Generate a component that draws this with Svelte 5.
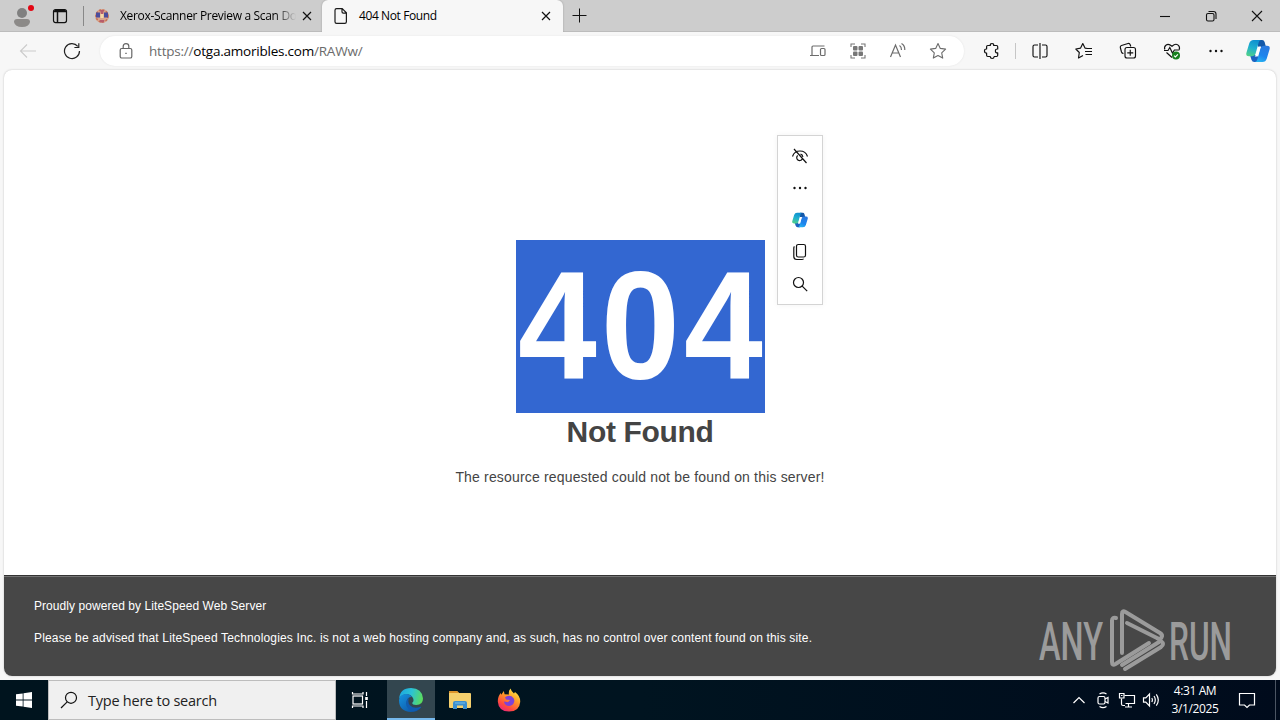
<script lang="ts">
    let url = { scheme: "https://", host: "otga.amoribles.com", path: "/RAWw/" };
    let clock = { time: "4:31 AM", date: "3/1/2025" };
</script>

{#snippet copilot(size: number)}
    <svg width={size} height={size} viewBox="0 0 24 24">
        <defs>
            <linearGradient id="cpA" x1="0.6" y1="0" x2="0.3" y2="1">
                <stop offset="0" stop-color="#0f8fd0" />
                <stop offset="0.5" stop-color="#20b0cf" />
                <stop offset="1" stop-color="#4fd08a" />
            </linearGradient>
            <linearGradient id="cpB" x1="0.7" y1="0" x2="0.3" y2="1">
                <stop offset="0" stop-color="#2a78de" />
                <stop offset="0.6" stop-color="#1c85ee" />
                <stop offset="1" stop-color="#27b4f0" />
            </linearGradient>
        </defs>
        <path d="M12 1h4.200q1.800 0 2.400 2l1.400 5h-8z" fill="#1358a8" />
        <path d="M12 23H8.200q-2 0-2.700-2.200L4 16h8z" fill="#1c62c0" />
        <path
            d="M7.500 1H15q-1.700.4-2.300 2.600L9.600 14.500Q8.800 17.300 6 17.300H3Q-.6 17.300.5 13.500L3.200 4.500Q4.300 1 7.500 1z"
            fill="url(#cpA)"
        />
        <path
            d="M16.500 23H9q1.700-.4 2.300-2.600l3.100-10.900q.8-2.800 3.600-2.800h3q3.600 0 2.500 3.800l-2.700 9Q19.700 23 16.500 23z"
            fill="url(#cpB)"
        />
        <path d="M12.300 7.500h2.900q-.8.800-1.100 2l-2.400 8h-3q.8-.9 1.200-2.200z" fill="#fff" />
    </svg>
{/snippet}

<div class="screen">
    <div class="tabstrip">
        <div class="cell avatar">
            <svg width="26" height="26" viewBox="0 0 26 26">
                <circle cx="13" cy="10" r="5" fill="#808080" />
                <path d="M5 19q0-3 3-3h10q3 0 3 3-1 5-8 5t-8-5z" fill="#8c8a88" />
                <circle cx="22" cy="5" r="3" fill="#e30613" />
            </svg>
        </div>
        <div class="cell workspace">
            <svg width="16" height="16" viewBox="0 0 16 16" fill="none" stroke="#111" stroke-width="1.200">
                <rect x="1.500" y="1.600" width="13" height="13" rx="2" />
                <path d="M1.500 3.500h13M5.500 4v10.500" stroke-width="1.500" />
                <path d="M2.500 2.800h11" stroke-width="1.800" />
            </svg>
        </div>
        <div class="tab">
            <svg class="favicon" width="16" height="16" viewBox="0 0 16 16">
                <circle cx="8" cy="8" r="7" fill="#d9a58c" />
                <circle cx="8" cy="8" r="6" fill="none" stroke="#c56d55" stroke-width="1.500" stroke-dasharray="2 1.500" />
                <path d="M2 4.500h4v5H2zM10 4.500h4v5h-4z" fill="#4b4d9d" />
                <path d="M6 2h4l-1 4H7zM5.500 12h5l-1 2.500h-3z" fill="#b65d6c" />
                <path d="M6.500 6h3v4h-3z" fill="#f4d8a8" />
            </svg>
            <span class="title faded">Xerox-Scanner Preview a Scan Do</span>
            <svg class="x" width="10" height="10" viewBox="0 0 10 10"><path d="M1 1l8 8M9 1L1 9" /></svg>
        </div>
        <div class="tab active">
            <svg class="favicon" width="16" height="18" viewBox="0 0 16 18" fill="none" stroke="#1b1b1b" stroke-width="1.200">
                <path d="M3.600 1.600h5.600l4.200 4.200v9q0 1.600-1.600 1.600H3.600Q2 16.400 2 14.800V3.200q0-1.600 1.600-1.600zM9 1.800v3q0 1.300 1.300 1.300h3" />
            </svg>
            <span class="title">404 Not Found</span>
            <svg class="x" width="10" height="10" viewBox="0 0 10 10"><path d="M1 1l8 8M9 1L1 9" /></svg>
        </div>
        <svg class="plus" width="16" height="16" viewBox="0 0 16 16"><path d="M8.500 1.500v14M1.500 8.500h14" /></svg>
        <div class="window-buttons">
            <svg width="12" height="12" viewBox="0 0 12 12"><path d="M1 6.500h10" /></svg>
            <svg width="12" height="12" viewBox="0 0 12 12">
                <rect x="1.500" y="3.500" width="7.500" height="7.500" rx="1.500" />
                <path d="M3.500 1.500h5q2.500 0 2.500 2.500v5" />
            </svg>
            <svg width="12" height="12" viewBox="0 0 12 12"><path d="M1 1l10 10M11 1L1 11" /></svg>
        </div>
    </div>

    <div class="toolbar">
        <div class="cell back">
            <svg width="18" height="16" viewBox="0 0 18 16" fill="none" stroke="#cbcbcb" stroke-width="1.100">
                <path d="M17 8H1.500M8 1.500L1.500 8 8 14.500" />
            </svg>
        </div>
        <div class="cell reload">
            <svg width="18" height="18" viewBox="0 0 18 18" fill="none" stroke="#222" stroke-width="1.200">
                <path d="M16.500 9A7.500 7.500 0 1 1 14.800 4.300M15.800 1.300v4.200h-4.400" />
            </svg>
        </div>
        <div class="omnibox">
            <svg class="lock" width="14" height="18" viewBox="0 0 14 18" fill="none" stroke="#666" stroke-width="1.200">
                <rect x="1.200" y="6.500" width="11.600" height="9.500" rx="1.600" />
                <path d="M4.200 6.500V4.300Q4.200 1.700 7 1.700t2.800 2.600v2.200" />
                <path d="M6.300 11.300h1.400" />
            </svg>
            <span class="url">{url.scheme}<b>{url.host}</b>{url.path}</span>
            <div class="actions">
                <svg width="18" height="18" viewBox="0 0 18 18" fill="none" stroke="#6c6c6c" stroke-width="1.200">
                    <path d="M15.500 4H4Q3 4 3 5v8M1 13.500h9" />
                    <rect x="11.500" y="6.500" width="4.500" height="7" rx="1" />
                </svg>
                <svg width="18" height="18" viewBox="0 0 18 18" fill="none" stroke="#777" stroke-width="1.100">
                    <path d="M2 5V2h4M12 2h4v3M16 13v3h-4M6 16H2v-3" />
                    <g fill="#777" stroke="none">
                        <rect x="4" y="4" width="4.500" height="4.500" rx="1" />
                        <rect x="9.500" y="4" width="4.500" height="4.500" rx="1" />
                        <rect x="4" y="9.500" width="4.500" height="4.500" rx="1" />
                        <rect x="9.500" y="9.500" width="4.500" height="4.500" rx="1" />
                    </g>
                </svg>
                <svg width="18" height="18" viewBox="0 0 18 18" fill="none" stroke="#6c6c6c" stroke-width="1.200">
                    <path d="M1.500 15L6.500 3l5 12M3.300 11h6.400M10.500 3.500q2 1.200 2 4.500M12.500 1.500q3.500 2 3.300 6.500" />
                </svg>
                <svg width="18" height="18" viewBox="0 0 18 18" fill="none" stroke="#6c6c6c" stroke-width="1.100">
                    <path d="M9 1.500l2.300 4.900 5.300.7-3.900 3.700 1 5.300L9 13.500l-4.700 2.600 1-5.300-3.900-3.700 5.300-.7z" stroke-linejoin="round" />
                </svg>
            </div>
        </div>
        <div class="cell extensions">
            <svg width="18" height="18" viewBox="0 0 18 18" fill="none" stroke="#111" stroke-width="1.200">
                <path
                    d="M4.800 3.500h2.500q-.2-2 1.700-2t1.700 2h2.800q1.200 0 1.200 1.200V7q-2.300-.2-2.300 1.900t2.300 1.900v2.500q0 1.200-1.200 1.200h-2.300q-.2 2-2 2t-2-2H4.800q-1.200 0-1.200-1.200V11q-2.100 0-2.100-2.100T3.600 7V4.700q0-1.200 1.200-1.200z"
                    stroke-linejoin="round"
                />
            </svg>
        </div>
        <div class="divider"></div>
        <div class="tools">
            <svg width="18" height="18" viewBox="0 0 18 18">
                <path d="M7 3H3.500Q2 3 2 4.500v9Q2 15 3.500 15H7M11 3h3.500Q16 3 16 4.500v9q0 1.500-1.500 1.500H11M9 1v16" />
            </svg>
            <svg width="18" height="18" viewBox="0 0 18 18">
                <path d="M12.500 6.500L10 6.100 7.800 1.500 5.600 6.100.8 7l3.500 3.500-.8 5.500 4.500-2.600M11.500 6.500H17M10 9.500h7M10.500 12.500H17" stroke-linejoin="round" />
            </svg>
            <svg width="18" height="18" viewBox="0 0 18 18">
                <path d="M4.500 11.500Q3 11.500 2.500 10L1.300 5.500Q1 4 2.500 3.500l6.500-2q1.600-.4 2.200 1.200l.6 1.800" />
                <rect x="6" y="5.500" width="10.500" height="10.500" rx="2" />
                <path d="M11.250 7.800v6M8.250 10.800h6" />
            </svg>
            <svg width="18" height="18" viewBox="0 0 18 18">
                <path d="M1.800 7.500Q.8 4.500 3.200 2.900T9 4.200q3.400-3 5.800-1.300t1.500 4.600M1 8.500h4l1.800-3 2.600 5.500 2-3h5M3.500 10.500L9 15.500" />
                <circle cx="13" cy="13.500" r="4" fill="#18801f" stroke="none" />
                <path d="M11 13.600l1.400 1.300 2.500-2.500" stroke="#fff" />
            </svg>
            <svg width="18" height="18" viewBox="0 0 18 18">
                <g fill="#111" stroke="none"><circle cx="3.500" cy="9" r="1.200" /><circle cx="9" cy="9" r="1.200" /><circle cx="14.500" cy="9" r="1.200" /></g>
            </svg>
        </div>
        <div class="cell assistant">{@render copilot(24)}</div>
    </div>

    <div class="viewport">
        <main>
            <h1><span>404</span></h1>
            <h2>Not Found</h2>
            <p>The resource requested could not be found on this server!</p>
        </main>
        <footer>
            <p class="powered">Proudly powered by LiteSpeed Web Server</p>
            <p class="advice">
                Please be advised that LiteSpeed Technologies Inc. is not a web hosting company and, as such, has no
                control over content found on this site.
            </p>
        </footer>

        <div class="mini-menu">
            <svg width="18" height="18" viewBox="0 0 18 18">
                <path d="M1.500 9.500Q3.300 4 9 4t7.500 5.500M3 2l12.500 14M6.700 8.500a2.900 2.900 0 1 0 4.500 3.500M9.500 7.200q2 .3 2.400 2.600" />
            </svg>
            <svg width="18" height="18" viewBox="0 0 18 18">
                <g fill="#111" stroke="none"><circle cx="3.500" cy="9" r="1.200" /><circle cx="9" cy="9" r="1.200" /><circle cx="14.500" cy="9" r="1.200" /></g>
            </svg>
            {@render copilot(16)}
            <svg width="18" height="18" viewBox="0 0 18 18">
                <rect x="5.500" y="1.500" width="9" height="12.500" rx="1.800" />
                <path d="M3.500 3.500Q2.800 4 2.800 5v8.500q0 3 3 3h5q1.200 0 1.700-.8" />
            </svg>
            <svg width="18" height="18" viewBox="0 0 18 18">
                <circle cx="7.500" cy="7.500" r="5" />
                <path d="M11.200 11.200l5 5" />
            </svg>
        </div>

        <svg class="watermark" width="200" height="66" viewBox="0 0 200 66">
            <text x="2" y="52" textLength="64" lengthAdjust="spacingAndGlyphs">ANY</text>
            <text x="132" y="52" textLength="63" lengthAdjust="spacingAndGlyphs">RUN</text>
            <g fill="none" stroke="#9b9b9b" stroke-width="4" stroke-linejoin="round" stroke-linecap="round">
                <path d="M79 10q-4-1-4 2.500V54q0 4 3.500 2L112 35" />
                <path d="M85 45V6q0-4 3.500-2L123 25q3 2 1.500 4.500T120 30L90 15" />
                <path d="M88 61l36-22q4-3 0-6M85 57l37-23" />
            </g>
        </svg>
    </div>

    <div class="taskbar">
        <div class="slot start">
            <svg width="16" height="16" viewBox="0 0 16 16" fill="#fff">
                <path d="M0 2.300l6.700-.9v6.200H0zM7.500 1.200L16 0v7.600H7.500zM0 8.400h6.700v6.200L0 13.700zM7.500 8.400H16V16l-8.500-1.200z" />
            </svg>
        </div>
        <div class="search">
            <svg width="18" height="18" viewBox="0 0 18 18" fill="none" stroke="#111" stroke-width="1.200">
                <circle cx="11" cy="6.800" r="5.500" />
                <path d="M7.200 10.800L1 17" />
            </svg>
            <span>Type here to search</span>
        </div>
        <div class="slot task-view">
            <svg width="18" height="18" viewBox="0 0 18 18" fill="none" stroke="#fff" stroke-width="1.200">
                <rect x="2" y="5" width="9.500" height="8" />
                <path d="M1.500 1v2h10.500V1M1.500 17v-2h10.500v2M15.500 1v4M15.500 10v7" />
                <path d="M14.200 6h2.600v3h-2.600z" fill="#fff" stroke="none" />
            </svg>
        </div>
        <div class="slot running">
            <svg width="24" height="24" viewBox="0 0 24 24">
                <defs>
                    <linearGradient id="edgeTop" x1="0" y1="0.3" x2="1" y2="0.5">
                        <stop offset="0" stop-color="#1ca7e0" />
                        <stop offset="0.5" stop-color="#2cc3d4" />
                        <stop offset="1" stop-color="#5bdc5c" />
                    </linearGradient>
                    <linearGradient id="edgeBase" x1="0" y1="0" x2="1" y2="1">
                        <stop offset="0" stop-color="#1593df" />
                        <stop offset="1" stop-color="#0c4a9b" />
                    </linearGradient>
                </defs>
                <path d="M0 11Q1 0 12 0t12 10.500q0 6.500-6.800 6.500-4 0-4-2.200 2-1.300 1-4.300Q12 6 7 6.300 2 6.800 0 11z" fill="url(#edgeTop)" />
                <path d="M0 12q.8-5.500 7-6 4 0 6 3-3-.6-4.500 2-2 4 1 7.500 4 4.500 12.500 1-3.600 4.500-10 4.500Q0 23.500 0 12z" fill="url(#edgeBase)" />
                <path d="M8.500 11q-3.500 5 1 10t12.500-1.500q.5-.9-.5-.7-6.500 2.400-10.300-1.300Q8.300 14.600 10 10z" fill="#105cb0" />
            </svg>
        </div>
        <div class="slot explorer">
            <svg width="22" height="20" viewBox="0 0 22 20">
                <path d="M0 2q0-1 1-1h7l2 2h11q1 0 1 1v13q0 1-1 1H1q-1 0-1-1z" fill="#f5d06d" />
                <path d="M0 2q0-1 1-1h7l2 2H0z" fill="#dd952b" />
                <path d="M4 19v-6q0-2 2-2h10q2 0 2 2v6h-4v-3.500H8V19z" fill="#3b8fcf" />
                <path d="M6 13h10" stroke="#74bde8" />
            </svg>
        </div>
        <div class="slot firefox">
            <svg width="24" height="24" viewBox="0 0 24 24">
                <defs>
                    <linearGradient id="fox" x1="0.8" y1="0" x2="0.2" y2="1">
                        <stop offset="0" stop-color="#fff14a" />
                        <stop offset="0.4" stop-color="#ff9a28" />
                        <stop offset="0.75" stop-color="#ff4a3e" />
                        <stop offset="1" stop-color="#e52384" />
                    </linearGradient>
                </defs>
                <path d="M13.500.5q1 3.300 3.500 5l1-1.500q5.500 4 5.200 10Q22.500 23.500 12 23.500T.8 13.500Q.8 8 3.800 5l.5 1.800L6.800 3l.8 3.200 4.300.2q-.5-3.500 1.600-5.900z" fill="url(#fox)" />
                <path d="M8 9.300q3-2.500 6.500-1 3.500 2 2.700 5.500-1 4-5 4.200-4.700-.2-5.200-4.500l4 .8 2-2.300-4-.5z" fill="#7d42d8" />
            </svg>
        </div>
        <div class="tray">
            <svg width="18" height="18" viewBox="0 0 18 18"><path d="M3.500 12L9 6.500l5.500 5.500" /></svg>
            <svg width="18" height="18" viewBox="0 0 18 18">
                <rect x="4" y="5.500" width="7" height="7.500" rx="1.500" />
                <path d="M11 8l3-1.500V12l-3-1.500M5.500 3Q9 .7 12.500 3M5.500 15.500q3.500 2.300 7 0" />
            </svg>
            <svg width="18" height="18" viewBox="0 0 18 18">
                <path d="M6.500 4.500h10v8h-9M10.500 12.500v3.500M7 16h7M3.500 7.500V13q0 1.500 1.500 1.500h2" />
                <path d="M1.500 2.500h4.500v4.500h-4.500zM3 4.500h1.500" />
            </svg>
            <svg width="18" height="18" viewBox="0 0 18 18">
                <path d="M1.500 6.800h2.300L7.500 3v12l-3.700-3.800H1.500zM9.800 7q1.200 2 0 4M12 5q2.600 4 0 8M14.300 3.300q4 5.700 0 11.400" />
            </svg>
        </div>
        <div class="clock">
            <span>{clock.time}</span>
            <span>{clock.date}</span>
        </div>
        <div class="notifications">
            <svg width="18" height="18" viewBox="0 0 18 18" fill="none" stroke="#fff" stroke-width="1.200">
                <path d="M1.500 2.500h15v11.500h-5L9 16.500 6.500 14h-5z" />
            </svg>
        </div>
        <div class="show-desktop"></div>
    </div>
</div>

<style>
    :global(body) {
        overflow: hidden;
    }

    .screen {
        display: flex;
        flex-direction: column;
        width: 1280px;
        height: 720px;
        background: #f7f7f7;
        font-family: "Open Sans", "Noto Sans", sans-serif;
        color: #000;
    }

    .screen svg {
        display: block;
        flex: none;
    }

    .cell,
    .slot {
        display: flex;
        align-items: center;
        justify-content: center;
        flex: none;
    }

    .tabstrip {
        display: flex;
        height: 32px;
        flex: none;
        background: #cdcdcd;
        box-shadow: inset 0 -1px #bcbcbc;
    }

    .avatar {
        width: 44px;
    }

    .workspace {
        width: 32px;
        margin-right: 7px;
    }

    .tab {
        display: flex;
        align-items: center;
        box-sizing: border-box;
        width: 239px;
        padding: 0 10px 0 11px;
        font-size: 12px;
        letter-spacing: -0.4px;
        border-radius: 0 0 6px 0;
    }

    .tab:not(.active) {
        background: linear-gradient(#888, #888) 0 6px / 1px 20px no-repeat;
    }

    .tab.active {
        width: 241px;
        padding-right: 12px;
        background: #f7f7f7;
        border-radius: 6px 6px 0 0;
        box-shadow: 0 0 2px #999;
        clip-path: inset(0 -2px 0 -2px);
    }

    .favicon {
        margin-right: 10px;
    }

    .title {
        flex: 1;
        white-space: nowrap;
        line-height: 20px;
    }

    .faded {
        margin-right: 3px;
        letter-spacing: -0.32px;
        mask-image: linear-gradient(90deg, #000 155px, transparent 176px);
    }

    .x,
    .plus {
        fill: none;
        stroke: #111;
        stroke-width: 1.2;
    }

    .plus {
        margin: 7px 0 0 8px;
        stroke-width: 1;
    }

    .window-buttons {
        display: flex;
        margin-left: auto;
        align-items: center;
        fill: none;
        stroke: #111;
        stroke-width: 1.1;
    }

    .window-buttons svg {
        margin: 0 17px;
    }

    .toolbar {
        display: flex;
        align-items: center;
        height: 38px;
        flex: none;
    }

    .back {
        width: 56px;
    }

    .reload {
        width: 32px;
        margin-right: 12px;
    }

    .omnibox {
        display: flex;
        align-items: center;
        box-sizing: border-box;
        width: 864px;
        height: 30px;
        padding: 0 6px 0 19px;
        border-radius: 15px;
        background: #fff;
        box-shadow: 0 0 2px #e2e2e2;
    }

    .url {
        margin-left: 16px;
        font-size: 13.5px;
        line-height: 20px;
        letter-spacing: -0.22px;
        color: #6b6b6b;
        white-space: nowrap;
    }

    .url b {
        font-weight: 400;
        color: #000;
    }

    .actions {
        display: flex;
        gap: 22px;
        margin-left: auto;
        padding-right: 11px;
    }

    .extensions {
        width: 56px;
        margin-right: -5px;
    }

    .divider {
        width: 1px;
        height: 16px;
        background: #c6c6c6;
    }

    .tools {
        display: flex;
        gap: 26px;
        margin-left: 15px;
        fill: none;
        stroke: #111;
        stroke-width: 1.15;
    }

    .assistant {
        width: 44px;
        margin-left: auto;
    }

    .viewport {
        position: relative;
        display: flex;
        flex-direction: column;
        height: 606px;
        flex: none;
        margin: 0 4px;
        border-radius: 8px;
        overflow: hidden;
        background: #fff;
        box-shadow: 0 0 2px #bbb;
        color: #444;
        font-family: "Liberation Sans", Arial, sans-serif;
    }

    main {
        display: flex;
        flex-direction: column;
        align-items: center;
        height: 505px;
        box-sizing: border-box;
        padding-top: 170px;
    }

    h1,
    h2,
    p {
        margin: 0;
    }

    h1 {
        display: flex;
        justify-content: center;
        height: 173px;
        width: 249px;
        background: #3367d1;
        color: #fff;
        font-size: 154px;
        line-height: 172px;
    }

    h1 span {
        letter-spacing: 4.6px;
        transform: translateX(2.1px) scaleX(0.92);
    }

    h2 {
        margin-top: 1px;
        font-size: 30px;
        line-height: 36px;
        letter-spacing: -0.35px;
    }

    main p {
        margin-top: 18px;
        font-size: 14px;
        line-height: 18px;
        letter-spacing: 0.17px;
    }

    footer {
        flex: 1;
        padding: 21px 30px 0;
        border-top: 1px solid #333;
        box-shadow: inset 0 1px #747474;
        background: #474747;
        color: #fff;
        font-size: 12px;
        line-height: 18px;
        white-space: nowrap;
    }

    .powered {
        letter-spacing: 0.06px;
    }

    .advice {
        margin-top: 14px;
        letter-spacing: 0.155px;
    }

    .mini-menu {
        position: absolute;
        left: 773px;
        top: 65px;
        display: grid;
        grid-auto-rows: 32px;
        place-items: center;
        box-sizing: border-box;
        width: 46px;
        height: 170px;
        padding: 4px 0;
        border: 1px solid #d4d4d4;
        background: #fff;
        box-shadow: 0 0 6px #0000000d;
        fill: none;
        stroke: #111;
        stroke-width: 1.2;
    }

    .mini-menu :global(svg path[fill]) {
        stroke: none;
    }

    .watermark {
        position: absolute;
        left: 1033px;
        top: 538px;
        font-family: Roboto, sans-serif;
        font-size: 53px;
        font-weight: 500;
        fill: #9b9b9b;
    }

    .taskbar {
        display: flex;
        height: 40px;
        flex: none;
        margin-top: 4px;
        background: linear-gradient(90deg, #00141e, #001420 50%, #000b1c);
        color: #fff;
    }

    .slot {
        width: 48px;
    }

    .search {
        display: flex;
        align-items: center;
        box-sizing: border-box;
        width: 288px;
        padding-left: 11px;
        gap: 10px;
        border: 1px solid #bdbdbd;
        background: #f0f0f0;
        color: #222;
        font-size: 14.5px;
        letter-spacing: -0.24px;
    }

    .running {
        box-sizing: border-box;
        margin: 0 1px 0 3px;
        background: #33464f;
        box-shadow: inset 0 -2px #76b9ed;
    }

    .firefox {
        margin-left: 1px;
    }

    .tray {
        display: flex;
        align-items: center;
        gap: 6px;
        margin-left: auto;
        fill: none;
        stroke: #fff;
        stroke-width: 1.2;
    }

    .clock {
        display: flex;
        flex-direction: column;
        align-items: center;
        justify-content: center;
        width: 70px;
        font-size: 12px;
        line-height: 18px;
        letter-spacing: -0.4px;
        white-space: nowrap;
    }

    .notifications {
        display: flex;
        align-items: center;
        justify-content: center;
        width: 34px;
        margin-right: 11px;
    }

    .show-desktop {
        width: 4px;
        border-left: 1px solid #4b5563;
    }
</style>
